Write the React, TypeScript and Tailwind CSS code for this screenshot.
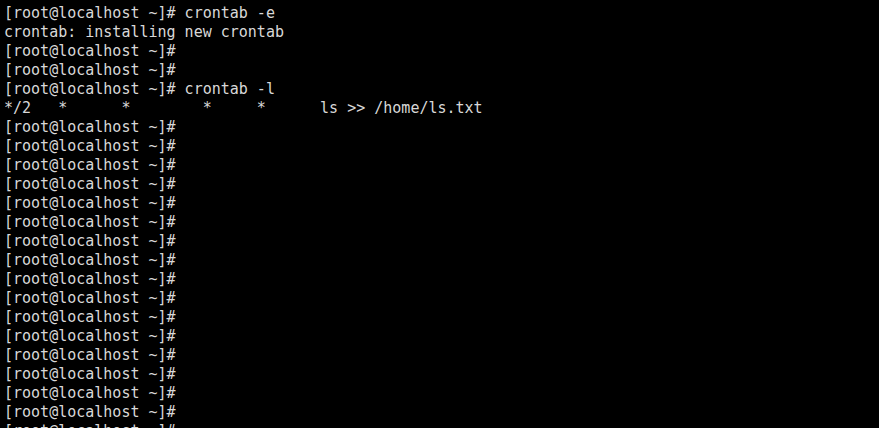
const prompt = "[root@localhost ~]# "

const lines: string[] = [
  prompt + "crontab -e",
  "crontab: installing new crontab",
  prompt,
  prompt,
  prompt + "crontab -l",
  "*/2   *      *        *     *      ls >> /home/ls.txt",
  ...Array.from({ length: 17 }, () => prompt),
]

export default function App() {
  return (
    <div className="h-[428px] w-[879px] overflow-hidden bg-black px-[4px] pt-[4px]">
      <div className="font-['DejaVu_Sans_Mono',monospace] text-[15px] leading-[19px] text-[#d8d8d8]">
        {lines.map((line, i) => (
          <div key={i} className="whitespace-pre">
            {line}
          </div>
        ))}
      </div>
    </div>
  )
}
